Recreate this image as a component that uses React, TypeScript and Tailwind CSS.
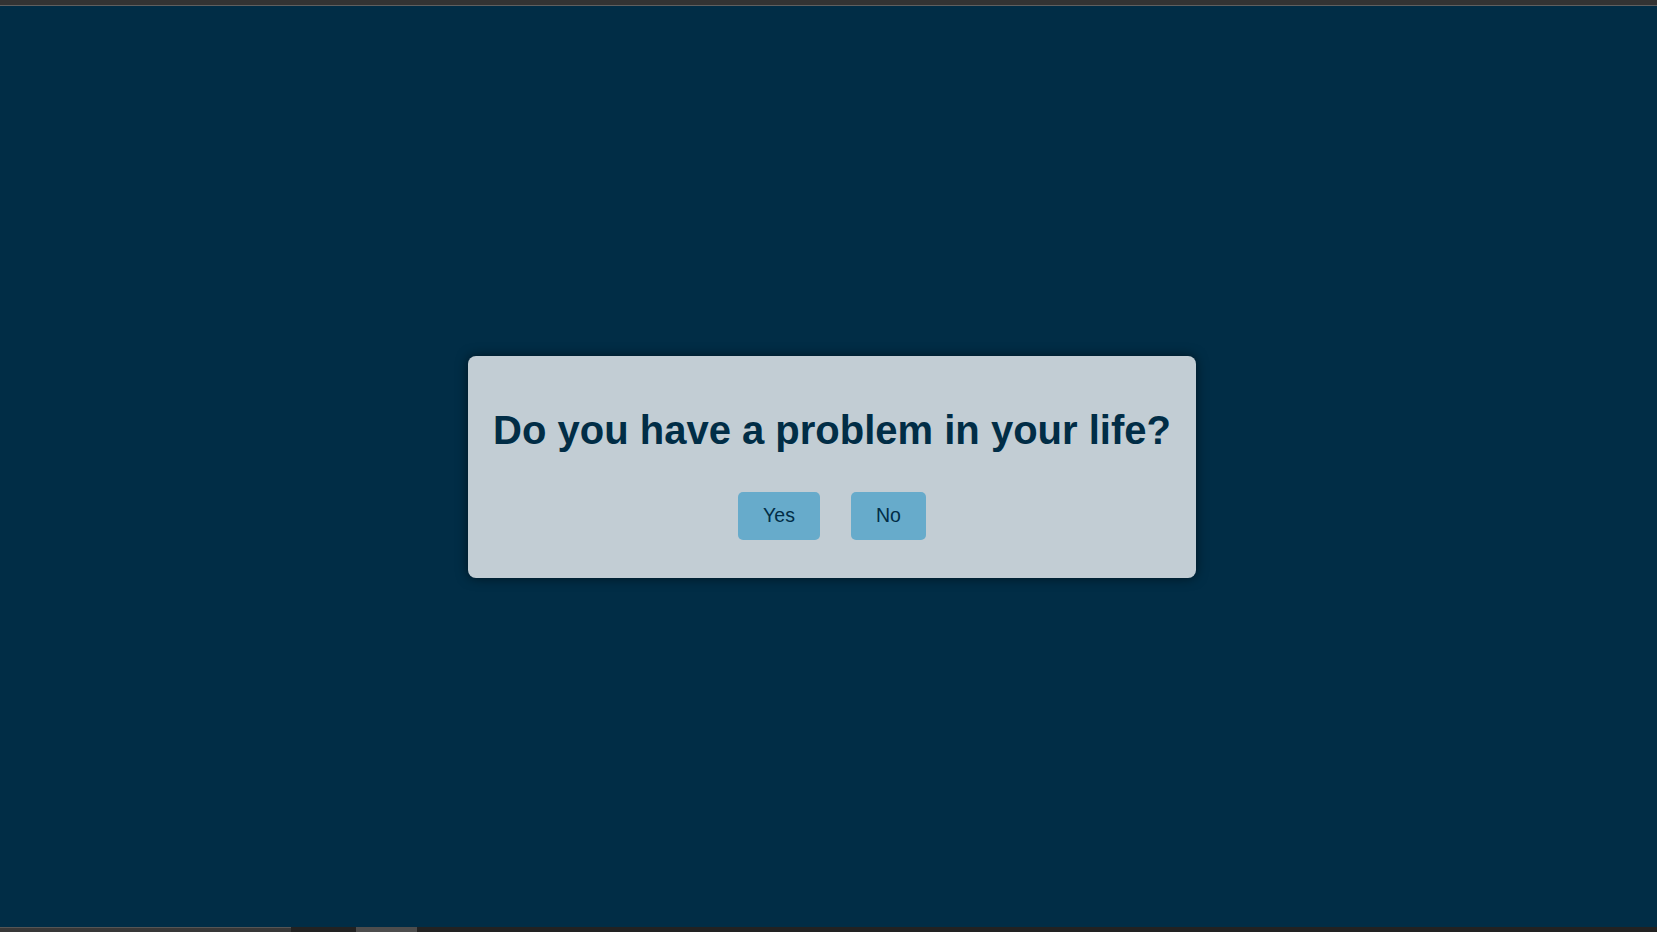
export default function App() {
  return (
    <div className="flex h-[932px] w-full flex-col overflow-hidden bg-[#012d46] font-['Liberation_Sans',Arial,sans-serif]">
      {/* top edge */}
      <div className="h-[5px] shrink-0 bg-[#333333]" />
      <div className="h-px shrink-0 bg-[#5f5f5f]" />

      {/* stage */}
      <main className="flex flex-1 items-center justify-center pl-[7px]">
        <div className="flex w-[728px] flex-col items-center rounded-[8px] bg-[#c2cdd4] pt-[51px] pb-[38px] shadow-[0_0_12px_rgba(0,0,0,0.55)]">
          <h1 className="text-[40px] leading-[46px] font-bold whitespace-nowrap text-[#012d46]">
            Do you have a problem in your life?
          </h1>
          <div className="mt-[39px] flex gap-[31px]">
            <button className="h-[48px] w-[82px] rounded-[5px] bg-[#67abcb] text-[19.5px] text-[#012d46]">
              Yes
            </button>
            <button className="h-[48px] w-[75px] rounded-[5px] bg-[#67abcb] text-[19.5px] text-[#012d46]">
              No
            </button>
          </div>
        </div>
      </main>

      {/* bottom edge */}
      <div className="flex h-[5px] shrink-0 bg-[#222222]">
        <div className="w-[291px] border-t border-[#555555] bg-[#383838]" />
        <div className="w-[65px]" />
        <div className="w-[61px] bg-[#4d4d4d]" />
      </div>
    </div>
  );
}
